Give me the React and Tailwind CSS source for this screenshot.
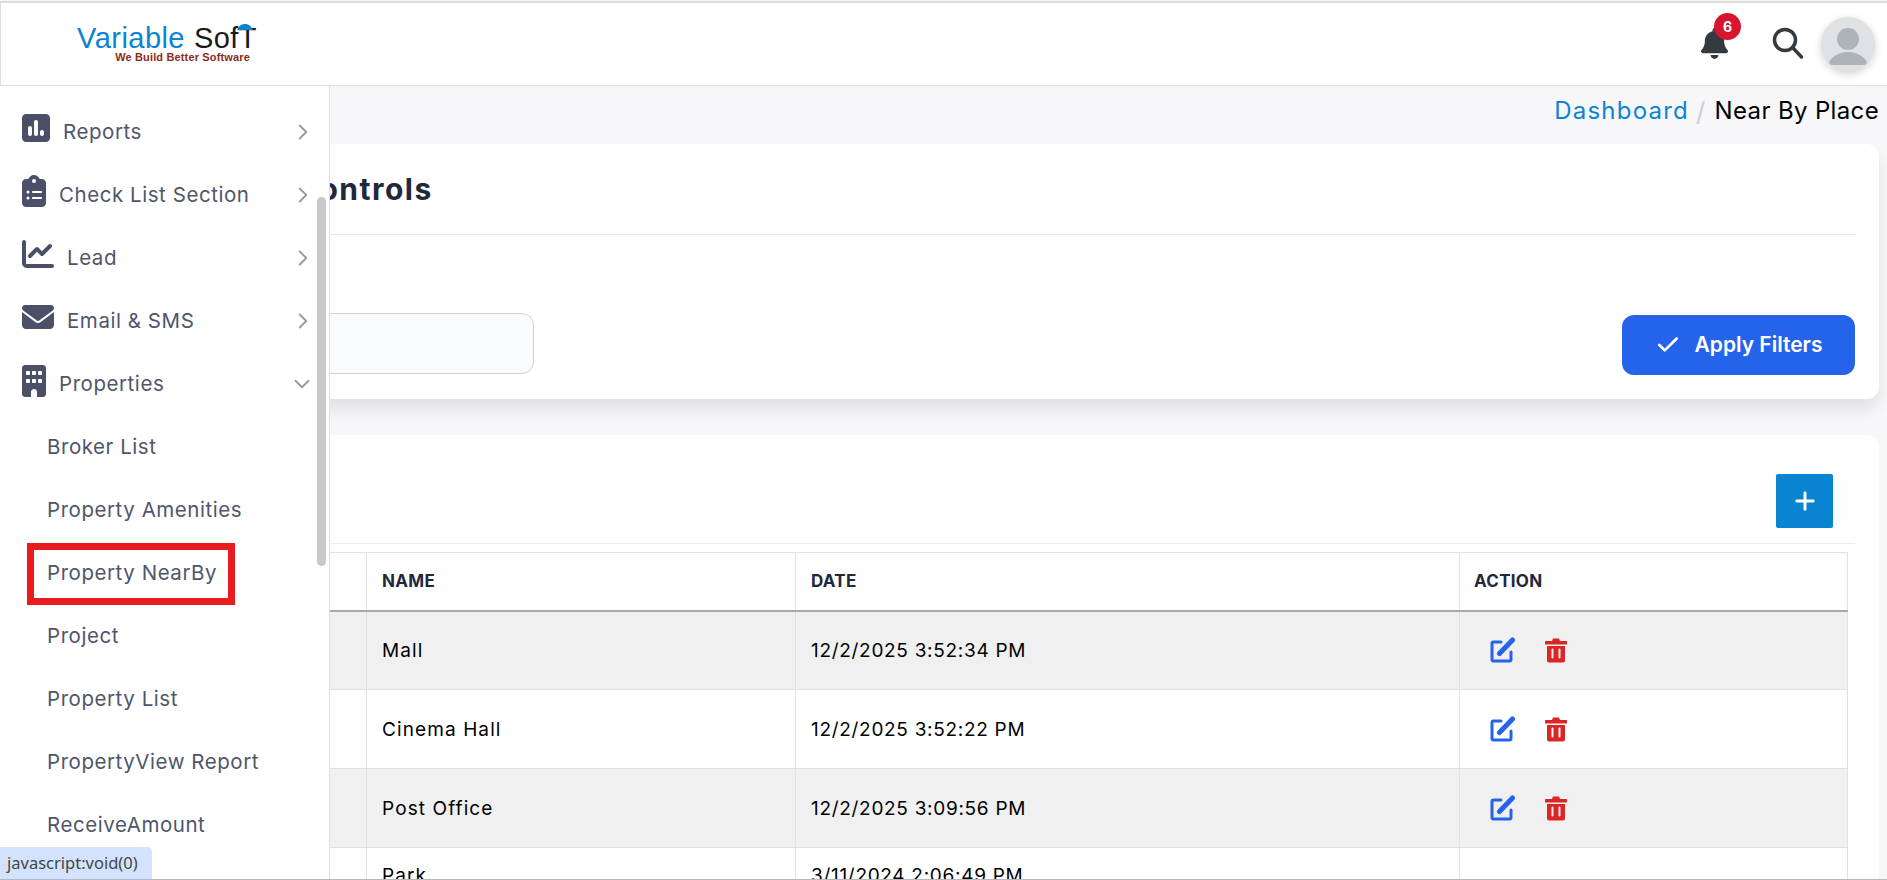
import React from "react";
import { ChevronRight, ChevronDown, Check, Plus } from "lucide-react";
import { FaBell, FaBuilding, FaChartLine, FaClipboardList, FaEnvelope, FaSquarePollVertical } from "react-icons/fa6";

const topItems = [
  { icon: FaSquarePollVertical, w: "w-[28px]", label: "Reports" },
  { icon: FaClipboardList, w: "w-[24px]", label: "Check List Section" },
  { icon: FaChartLine, w: "w-[32px]", label: "Lead" },
  { icon: FaEnvelope, w: "w-[32px]", label: "Email & SMS" },
];
const subItems = ["Broker List", "Property Amenities", "Property NearBy", "Project", "Property List", "PropertyView Report", "ReceiveAmount"];
const rows = [
  ["Mall", "12/2/2025 3:52:34 PM", true],
  ["Cinema Hall", "12/2/2025 3:52:22 PM", true],
  ["Post Office", "12/2/2025 3:09:56 PM", true],
  ["Park", "3/11/2024 2:06:49 PM", false],
];

function EditIcon() {
  return (
    <svg width="25" height="26" viewBox="0 0 25 26" fill="none" className="text-[#2563eb]">
      <path d="M11 5H3.500A1.500 1.500 0 0 0 2 6.500v16A1.500 1.500 0 0 0 3.500 24h16a1.500 1.500 0 0 0 1.500-1.500V15" stroke="currentColor" strokeWidth="3" strokeLinecap="round" />
      <path d="M9.500 16.500 22.500 3" stroke="currentColor" strokeWidth="5" strokeLinecap="round" />
    </svg>
  );
}
function TrashIcon() {
  return (
    <svg width="22" height="25" viewBox="0 0 22 25" className="text-[#dc2626]">
      <path fill="currentColor" fillRule="evenodd" d="M8 0.500h6L15 3h6a1 1 0 0 1 0 3.500H1A1 1 0 0 1 1 3h6ZM2 8h18v14.500a2 2 0 0 1-2 2H4a2 2 0 0 1-2-2ZM7.500 10.500a1 1 0 0 0-1 1v8a1 1 0 0 0 2 0v-8a1 1 0 0 0-1-1Zm7 0a1 1 0 0 0-1 1v8a1 1 0 0 0 2 0v-8a1 1 0 0 0-1-1Z" />
    </svg>
  );
}

function Logo() {
  return (
    <div className="relative flex flex-col items-end w-[178px] leading-none font-['Liberation_Sans',sans-serif]">
      <div className="text-[29px] leading-[25px] whitespace-nowrap tracking-[0.45px]">
        <span className="text-[#0b84d4]">Variable</span>
        <span className="text-[#1a1a1a] ml-[9px]">SofT</span>
      </div>
      <div className="text-[11px] leading-[12px] text-[#8f2a18] whitespace-nowrap tracking-[0.15px] mr-[7px] font-bold">We Build Better Software</div>
      <svg width="18" height="6" viewBox="0 0 18 6" className="absolute right-[3px] -top-[2px]">
        <path d="M1 6C3 1.500 6 0 9 0s6 1.500 8 6Z" fill="#0b84d4" />
      </svg>
    </div>
  );
}

export default function App() {
  return (
    <div className="relative h-[880px] overflow-hidden bg-[#f7f7fa] pt-px font-['Inter',sans-serif]">
      <header className="h-[85px] bg-white border-t-2 border-b border-l border-[#dedede] flex items-center justify-between">
        <div className="pl-[78px]"><Logo /></div>
        <div className="flex items-center mr-[12px]">
          <div className="relative mr-[44px] mt-[-2px]">
            <FaBell className="w-[27px] h-[31px] text-[#343a40]" />
            <span className="absolute -top-[15px] -right-[13px] w-[27px] h-[27px] rounded-full bg-[#d8152f] text-white text-[14px] font-bold flex items-center justify-center">6</span>
          </div>
          <svg width="32" height="33" viewBox="0 0 32 33" fill="none" className="mr-[17px] mt-[-1px]">
            <circle cx="13" cy="13" r="10.500" stroke="#343a40" strokeWidth="3.500" />
            <path d="M21 21l8.500 9" stroke="#343a40" strokeWidth="3.500" strokeLinecap="round" />
          </svg>
          <div className="w-[54px] h-[54px] rounded-full bg-[#dfe1e5] overflow-hidden relative shadow-[0_3px_8px_rgba(0,0,0,0.18)]">
            <svg width="54" height="54" viewBox="0 0 54 54">
              <circle cx="27" cy="22" r="11" fill="#adb3b8" />
              <path d="M7 48c2-8 11-13 20-13s18 5 20 13Z" fill="#adb3b8" />
            </svg>
          </div>
        </div>
      </header>

      <main className="pl-[72px] pr-[8px]">
        <nav className="flex justify-end items-center h-[58px] pb-[8px] text-[24px] tracking-[0.35px] whitespace-nowrap">
          <span className="text-[#0b84d4] tracking-[1.2px]">Dashboard</span>
          <span className="text-[#cfcfcf] ml-[7px] mr-[9px] text-[26px]">/</span>
          <span className="text-black">Near By Place</span>
        </nav>

        <section className="bg-white rounded-[12px] h-[255px] shadow-[0_10px_15px_rgba(0,0,0,0.09)]">
          <div className="h-[91px] mx-[24px] border-b border-[#e2e8f0] flex items-center">
            <h2 className="text-[30px] font-bold text-[#1e293b] ml-[107px] tracking-[1.5px] whitespace-nowrap">Filter Controls</h2>
          </div>
          <div className="flex items-start justify-between px-[24px] pt-[78px]">
            <div className="w-[438px] h-[61px] rounded-[12px] bg-[#f8fafc] border border-[#cbd5e1]" />
            <button className="w-[233px] h-[60px] mt-[2px] rounded-[12px] bg-[#2563eb] text-white text-[21px] font-semibold flex items-center justify-center gap-[14px] whitespace-nowrap">
              <Check className="w-[26px] h-[26px]" strokeWidth={2.5} />
              Apply Filters
            </button>
          </div>
        </section>

        <section className="bg-[#fefefe] rounded-[12px] mt-[36px] px-[24px] pt-[39px]">
          <div className="flex justify-end border-b border-[#eeeeee] pb-[15px] pr-[22px]">
            <button className="w-[57px] h-[54px] rounded-[2px] bg-[#0984d0] text-white flex items-center justify-center">
              <Plus className="w-[28px] h-[28px]" strokeWidth={2.5} />
            </button>
          </div>
          <table className="mt-[8px] w-[1751px] table-fixed border-collapse text-[19px] text-black">
            <colgroup>
              <col className="w-[270px]" />
              <col className="w-[429px]" />
              <col className="w-[664px]" />
              <col className="w-[388px]" />
            </colgroup>
            <thead>
              <tr className="h-[58px] text-left text-[17px] font-semibold uppercase text-[#1e293b] border-b-2 border-b-[#aaaaaa]">
                <th className="border border-[#dee2e6] border-b-[#aaaaaa]"></th>
                <th className="border border-[#dee2e6] border-b-[#aaaaaa] px-[15px] tracking-[0.3px]">Name</th>
                <th className="border border-[#dee2e6] border-b-[#aaaaaa] px-[15px] tracking-[0.3px]">Date</th>
                <th className="border border-[#dee2e6] border-b-[#aaaaaa] px-[14px] tracking-[0.3px]">Action</th>
              </tr>
            </thead>
            <tbody>
              {rows.map(([name, date, icons], i) => (
                <tr key={name} className={i % 2 === 0 ? "h-[79px] bg-[#f0f0f0]" : "h-[79px] bg-white"}>
                  <td className="border border-[#dee2e6]"></td>
                  <td className={"border border-[#dee2e6] px-[15px] tracking-[1.1px] " + (icons ? "pt-[2px]" : "align-top pt-[14px]")}>{name}</td>
                  <td className={"border border-[#dee2e6] px-[15px] tracking-[0.7px] " + (icons ? "pt-[2px]" : "align-top pt-[14px]")}>{date}</td>
                  <td className="border border-[#dee2e6] pl-[30px]">
                    {icons ? (
                      <div className="flex items-center gap-[30px]">
                        <EditIcon />
                        <TrashIcon />
                      </div>
                    ) : null}
                  </td>
                </tr>
              ))}
            </tbody>
          </table>
        </section>
      </main>

      <aside className="absolute left-0 top-[86px] bottom-0 w-[330px] bg-white border-r border-[#dfdfe4] pt-[15px] text-[20.500px] text-[#50566a] tracking-[0.55px] whitespace-nowrap overflow-hidden">
        {topItems.map((item) => {
          const Icon = item.icon;
          return (
            <div key={item.label} className="h-[63px] flex items-center pl-[22px] pr-[13px]">
              <Icon className={item.w + " h-[32px] mr-[13px] -mt-[10px] text-[#4b4f67]"} />
              <span className="flex-1">{item.label}</span>
              <ChevronRight className="w-[26px] h-[26px] text-[#9a9a9a] -mt-[1px]" strokeWidth={1.7} />
            </div>
          );
        })}
        <div className="h-[63px] flex items-center pl-[22px] pr-[14px]">
          <FaBuilding className="w-[24px] h-[32px] mr-[13px] -mt-[8px] text-[#4b4f67]" />
          <span className="flex-1">Properties</span>
          <ChevronDown className="w-[26px] h-[26px] text-[#9a9a9a] -mt-[1px]" strokeWidth={1.7} />
        </div>
        {subItems.map((label) => (
          <div key={label} className="h-[63px] flex items-center pl-[47px]">
            {label === "Property NearBy" ? (
              <span className="-ml-[20px] pl-[13px] pr-[11px] h-[62px] flex items-center border-[7px] border-[#e81c1f]">{label}</span>
            ) : (
              label
            )}
          </div>
        ))}
        <div className="absolute left-[317px] top-[111px] w-[9px] h-[369px] rounded-full bg-[#c8c8c8]" />
      </aside>

      <div className="absolute left-0 bottom-0 w-[152px] h-[33px] bg-[#d3e3fd] rounded-tr-[5px] pl-[7px] flex items-center text-[16.500px] text-[#444746] font-['Noto_Sans',sans-serif] whitespace-nowrap">javascript:void(0)</div>
      <div className="absolute left-0 right-0 bottom-0 h-px bg-[#b4b8c0]" />
    </div>
  );
}
